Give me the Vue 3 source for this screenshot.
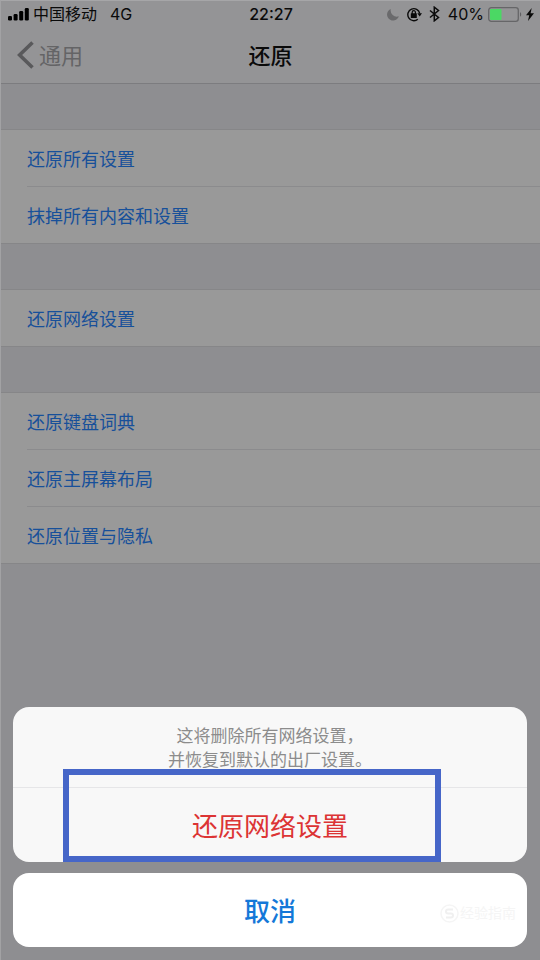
<script setup>
const groups = [
  ['还原所有设置', '抹掉所有内容和设置'],
  ['还原网络设置'],
  ['还原键盘词典', '还原主屏幕布局', '还原位置与隐私'],
]
</script>

<template>
  <div class="screen">
    <header class="top">
      <div class="status">
        <div class="status-left">
          <svg class="signal" width="21" height="14" viewBox="0 0 21 14" aria-hidden="true">
            <rect x="0" y="9" width="4" height="4.5" rx="1.2" />
            <rect x="5.6" y="7" width="4" height="6.5" rx="1.2" />
            <rect x="11.2" y="4" width="4" height="9.5" rx="1.2" />
            <rect x="16.8" y="1" width="4" height="12.5" rx="1.2" />
          </svg>
          <span class="carrier">中国移动</span>
          <span class="network">4G</span>
        </div>
        <span class="time">22:27</span>
        <div class="status-right">
          <svg class="moon" width="12" height="13" viewBox="0 0 12 13" aria-hidden="true">
            <path d="M3.8 1A6 6 0 1 0 11.8 8.3 6.2 6.2 0 0 1 3.8 1Z" fill="#6a6a6c" />
          </svg>
          <svg class="lock" width="15" height="15" viewBox="0 0 15 15" fill="none" stroke="#0a0a0a" aria-hidden="true">
            <path d="M10.8 12.2A6 6 0 1 1 12.7 6.4" stroke-width="1.4" />
            <path d="M10.3 6.2H15L12.7 9.4Z" fill="#0a0a0a" stroke="none" />
            <rect x="3.8" y="6.3" width="6" height="4.6" rx=".5" fill="#0a0a0a" stroke="none" />
            <path d="M5.2 7V5.2a1.6 1.6 0 0 1 3.2 0V7" stroke-width="1.2" />
          </svg>
          <svg class="bluetooth" width="11" height="16" viewBox="0 0 11 16" fill="none" stroke="#0a0a0a" stroke-width="1.5" aria-hidden="true">
            <path d="M1 4.5 9.5 11.5 5.3 14.8V1.2L9.5 4.5 1 11.5" />
          </svg>
          <span class="percent">40%</span>
          <svg class="battery" width="34" height="15" viewBox="0 0 34 15" aria-hidden="true">
            <rect x=".7" y=".7" width="29.6" height="13.6" rx="2.6" fill="none" stroke="#666668" stroke-width="1.3" />
            <rect x="2" y="2" width="11.5" height="11" rx="1" fill="#4bd864" />
            <path d="M32 5.3c1.6.4 1.6 4 0 4.4Z" fill="#5f5f61" />
          </svg>
          <svg class="bolt" width="8" height="13" viewBox="0 0 8 13" aria-hidden="true">
            <path d="M5.7 0 0 7.2h3.2L2 13l6-7.8H4.6Z" fill="#0a0a0a" />
          </svg>
        </div>
      </div>
      <nav class="nav">
        <a class="back" href="#">
          <svg width="17" height="28" viewBox="0 0 17 28" fill="none" stroke="#59595b" stroke-width="3.6" aria-hidden="true">
            <path d="M15.5 1.5 2.6 14l12.9 12.5" />
          </svg>
          <span>通用</span>
        </a>
        <h1>还原</h1>
      </nav>
    </header>

    <main class="groups">
      <section v-for="(group, i) in groups" :key="i" class="group">
        <button v-for="item in group" :key="item" class="row" type="button">
          <span>{{ item }}</span>
        </button>
      </section>
    </main>

    <div class="sheet" role="dialog" aria-describedby="sheet-message">
      <div class="panel">
        <p id="sheet-message">这将删除所有网络设置，<br />并恢复到默认的出厂设置。</p>
        <button class="confirm" type="button">还原网络设置</button>
        <div class="highlight"></div>
      </div>
      <button class="cancel" type="button">取消</button>
      <div class="watermark">
        <svg width="19" height="19" viewBox="0 0 19 19" fill="none" aria-hidden="true">
          <circle cx="9.5" cy="9.5" r="8.5" stroke="#f5f5f5" stroke-width="1.5" />
          <path d="M13 5.5H8a2 2 0 0 0 0 4h3a2 2 0 0 1 0 4H6" stroke="#f0f0f0" stroke-width="2" />
        </svg>
        <span>经验指南</span>
      </div>
    </div>
  </div>
</template>

<style>
body {
  margin: 0;
  background: #8e8e91;
}
</style>

<style scoped>
.screen {
  position: relative;
  box-sizing: border-box;
  min-height: 100vh;
  background: #8e8e91;
  border-top: 1px solid #a6a6a8;
  border-left: 1px solid #a2a2a4;
  font-family: Inter, "Noto Sans CJK SC", sans-serif;
  color: #0a0a0a;
}
button {
  border: 0;
  margin: 0;
  padding: 0;
  background: none;
  font: inherit;
}
svg {
  display: block;
  flex: none;
}
.top {
  background: #949496;
  border-bottom: 1px solid #7c7c7f;
}
.status {
  display: grid;
  grid-template-columns: 1fr auto 1fr;
  align-items: center;
  height: 26px;
  padding: 0 6px 0 7px;
  font-size: 16px;
  line-height: 26px;
}
.status-left,
.status-right {
  display: flex;
  align-items: center;
}
.status-right {
  justify-content: flex-end;
}
.carrier {
  margin-left: 4px;
}
.network {
  margin-left: 13px;
}
.time {
  font-weight: 500;
}
.lock {
  margin-left: 8px;
}
.bluetooth {
  margin-left: 7px;
}
.percent {
  margin-left: 8px;
}
.battery {
  margin-left: 4px;
}
.bolt {
  margin-left: 4px;
}
.nav {
  display: grid;
  grid-template-columns: 1fr auto 1fr;
  align-items: center;
  height: 56px;
  padding: 0 16px;
  font-size: 22px;
}
.back {
  display: flex;
  align-items: center;
  gap: 5px;
  color: #646466;
  text-decoration: none;
}
h1 {
  margin: 0;
  font-size: 22px;
  font-weight: 500;
}
.back span,
h1 {
  padding-bottom: 2px;
}
.groups {
  display: flex;
  flex-direction: column;
  gap: 45px;
  padding-top: 45px;
}
.group {
  background: #999;
  border-top: 1px solid #868688;
  border-bottom: 1px solid #868688;
}
.row {
  display: block;
  width: 100%;
  padding-left: 26px;
  font-size: 18px;
  line-height: 52px;
  color: #17509a;
  text-align: left;
}
.row span {
  display: block;
  padding-top: 4px;
}
.row + .row span {
  border-top: 1px solid #8b8b8d;
}
.sheet {
  position: absolute;
  right: 13px;
  bottom: 13px;
  left: 12px;
  display: flex;
  flex-direction: column;
  gap: 11px;
}
.panel {
  position: relative;
  background: #f8f8f8;
  border-radius: 16px;
}
.panel p {
  margin: 0;
  padding: 17px 0 15px;
  font-size: 17px;
  line-height: 24px;
  text-align: center;
  color: #8c8c8c;
}
.confirm {
  display: block;
  width: 100%;
  height: 75px;
  padding-bottom: 2px;
  border-top: 1px solid #e6e6e8;
  font-size: 26px;
  color: #dc3434;
}
.highlight {
  position: absolute;
  right: 86px;
  bottom: 0;
  left: 50px;
  box-sizing: border-box;
  height: 93px;
  border: 6px solid #4666c8;
  pointer-events: none;
}
.cancel {
  height: 74px;
  padding-bottom: 2px;
  border-radius: 16px;
  background: #fff;
  font-size: 26px;
  font-weight: 500;
  color: #1478d8;
}
.watermark {
  position: absolute;
  right: 11px;
  bottom: 24px;
  display: flex;
  align-items: center;
  gap: 1px;
  font-size: 14px;
  line-height: 20px;
  color: #f5f5f5;
  pointer-events: none;
}
</style>
